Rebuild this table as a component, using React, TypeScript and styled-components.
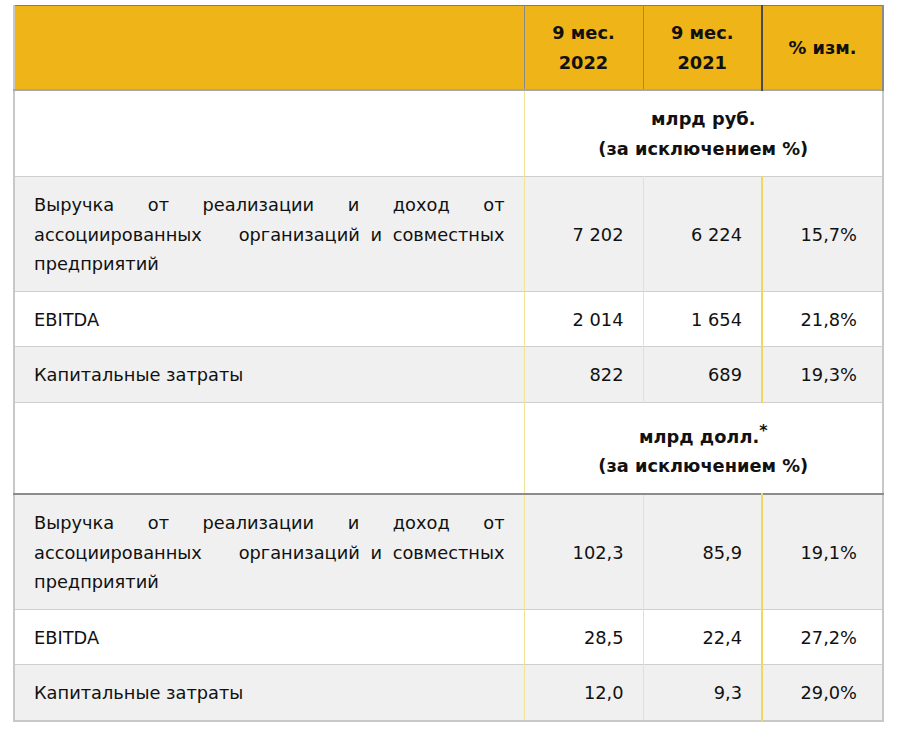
import React from "react";
import styled, { createGlobalStyle, css } from "styled-components";

const Global = createGlobalStyle`
  html, body { margin: 0; padding: 0; background: #fff; }
  body { font-family: "DejaVu Sans", Verdana, sans-serif; color: #111; }
`;

const Wrap = styled.div`
  padding: 5px 15px 0 13px;
`;

const Table = styled.table`
  width: 869px;
  border-collapse: collapse;
  table-layout: fixed;
  font-size: 17.8px;
  line-height: 29.5px;
  border-left: 2px solid #c8c8c8;
  border-right: 2px solid #c8c8c8;
  border-bottom: 2px solid #c8c8c8;
`;

const HeadRow = styled.tr`
  background: #efb417;
  border-top: 1px solid #7a7a7a;
  border-bottom: 2px solid #a6a6a6;
`;

const HeadCell = styled.th<{ $dark?: boolean; $first?: boolean }>`
  padding: 12px 10px 12px;
  font-weight: bold;
  text-align: center;
  border-left: 1px solid #8a8a8a;
  ${(p) =>
    p.$dark &&
    css`
      border-left: 2px solid #4a4a4a;
    `}
  ${(p) =>
    p.$first &&
    css`
      border-left: 1px solid #444;
    `}
  &:last-child {
    border-right: 2px solid #8a8a8a;
  }
`;

const Row = styled.tr<{ $shade?: boolean; $strong?: boolean }>`
  background: ${(p) => (p.$shade ? "#f0f0f0" : "#fff")};
  border-bottom: ${(p) => (p.$strong ? "2px solid #8c8c8c" : "1px solid #cfcfcf")};
`;

const Label = styled.td`
  padding: 13px 19px 12px 19px;
  text-align: justify;
  vertical-align: middle;
`;

const Keep = styled.span`
  display: inline-block;
  white-space: nowrap;
  word-spacing: 5px;
`;

const Num = styled.td<{ $strong?: boolean; $wide?: boolean }>`
  padding: 13px ${(p) => (p.$wide ? "25px" : "19px")} 12px 10px;
  text-align: right;
  vertical-align: middle;
  white-space: nowrap;
  border-left: ${(p) => (p.$strong ? "2px solid #f1d660" : "1px solid #f3e29a")};
`;

const Unit = styled.td`
  padding: 13px 10px;
  text-align: center;
  font-weight: bold;
  border-left: 1px solid #f3e29a;
`;

const Sup = styled.sup`
  font-size: 16px;
`;

type DataRow = { label: React.ReactNode; a: string; b: string; c: string; shade: boolean };

const longLabel = (
  <>
    Выручка от реализации и доход от ассоциированных <Keep>организаций и совместных</Keep>{" "}
    предприятий
  </>
);

const rub: DataRow[] = [
  { label: longLabel, a: "7 202", b: "6 224", c: "15,7%", shade: true },
  { label: "EBITDA", a: "2 014", b: "1 654", c: "21,8%", shade: false },
  { label: "Капитальные затраты", a: "822", b: "689", c: "19,3%", shade: true },
];

const usd: DataRow[] = [
  { label: longLabel, a: "102,3", b: "85,9", c: "19,1%", shade: true },
  { label: "EBITDA", a: "28,5", b: "22,4", c: "27,2%", shade: false },
  { label: "Капитальные затраты", a: "12,0", b: "9,3", c: "29,0%", shade: true },
];

const renderRows = (rows: DataRow[]) =>
  rows.map((r, i) => (
    <Row key={i} $shade={r.shade}>
      <Label>{r.label}</Label>
      <Num>{r.a}</Num>
      <Num>{r.b}</Num>
      <Num $strong $wide>
        {r.c}
      </Num>
    </Row>
  ));

export default function App() {
  return (
    <>
      <Global />
      <Wrap>
        <Table>
          <colgroup>
            <col style={{ width: 510 }} />
            <col style={{ width: 119 }} />
            <col style={{ width: 119 }} />
            <col style={{ width: 121 }} />
          </colgroup>
          <thead>
            <HeadRow>
              <HeadCell $first />
              <HeadCell>
                9 мес.
                <br />
                2022
              </HeadCell>
              <HeadCell>
                9 мес.
                <br />
                2021
              </HeadCell>
              <HeadCell $dark>% изм.</HeadCell>
            </HeadRow>
          </thead>
          <tbody>
            <Row>
              <Label />
              <Unit colSpan={3}>
                млрд руб.
                <br />
                (за исключением %)
              </Unit>
            </Row>
            {renderRows(rub)}
            <Row $strong>
              <Label />
              <Unit colSpan={3}>
                млрд долл.<Sup>*</Sup>
                <br />
                (за исключением %)
              </Unit>
            </Row>
            {renderRows(usd)}
          </tbody>
        </Table>
      </Wrap>
    </>
  );
}
